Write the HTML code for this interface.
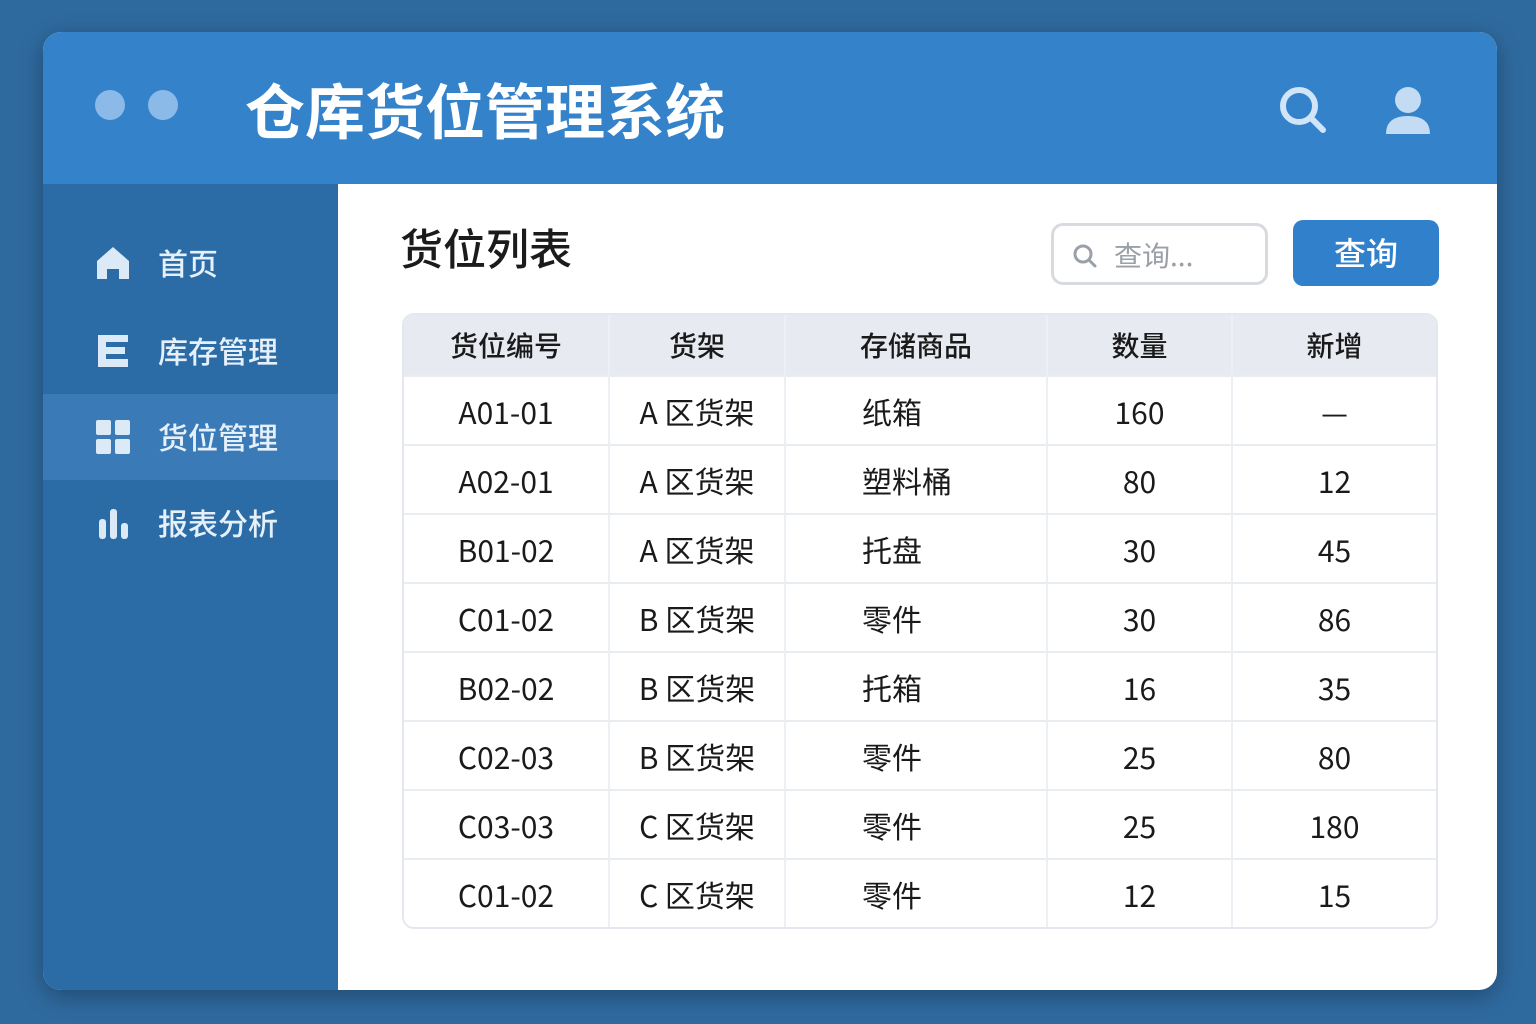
<!DOCTYPE html>
<html><head><meta charset="utf-8"><style>
*{margin:0;padding:0;box-sizing:border-box}
body{width:1536px;height:1024px;background:#2f6a9f;font-family:"Liberation Sans","Noto Sans CJK SC",sans-serif;position:relative;overflow:hidden}
.win{position:absolute;left:43px;top:32px;width:1454px;height:958px;border-radius:18px;overflow:hidden;background:#fff;box-shadow:0 6px 24px rgba(0,0,0,.3)}
.hdr{position:absolute;left:0;top:0;width:100%;height:152px;background:#3482ca}
.dot{position:absolute;top:58px;width:30px;height:30px;border-radius:50%;background:#8bb9e8}
.title{position:absolute;left:202px;top:33px;font-size:60px;font-weight:bold;color:#fff;font-family:"Noto Sans CJK SC",sans-serif}
.side{position:absolute;left:0;top:152px;width:295px;height:806px;background:#2b6ca6}
.item{position:absolute;left:0;width:295px;height:86px;color:#e6f0fb;font-size:30px;font-family:"Noto Sans CJK SC",sans-serif;font-weight:500}
.item span{position:absolute;left:115px;top:20px}
.item svg{position:absolute;left:52px;top:25px}
.main h2{position:absolute;left:357px;top:184px;font-size:43px;font-weight:500;color:#1b1b1b;font-family:"Noto Sans CJK SC",sans-serif}
.search{position:absolute;left:1008px;top:191px;width:217px;height:62px;border:3px solid #d7dadf;border-radius:12px;color:#9aa0a8;font-size:28px;font-family:"Noto Sans CJK SC",sans-serif}
.btn{position:absolute;left:1250px;top:188px;width:146px;height:66px;background:#3180cc;border-radius:10px;color:#fff;font-size:32px;text-align:center;line-height:64px;font-family:"Noto Sans CJK SC",sans-serif;font-weight:500}
table{position:absolute;left:359px;top:281px;width:1036px;border-collapse:separate;border-spacing:0;border:2px solid #e4e8ee;border-radius:12px;overflow:hidden;font-family:"Noto Sans CJK SC","Liberation Sans",sans-serif}
th{height:60px;background:#e7ebf1;font-size:28px;font-weight:500;color:#1a1a1a}
td{height:69px;font-size:30px;color:#1a1a1a;text-align:center;border-top:2px solid #e9ecf0}
th+th,td+td{border-left:2px solid #eceff3}
td.l{text-align:left;padding-left:76px}
</style></head><body>
<div class="win">
 <div class="hdr">
  <div class="dot" style="left:52px"></div><div class="dot" style="left:105px"></div>
  <div class="title">仓库货位管理系统</div>
  <svg style="position:absolute;left:1234px;top:52px" width="52" height="52" viewBox="0 0 52 52"><circle cx="22" cy="22" r="16" fill="none" stroke="#d2e4f7" stroke-width="6"/><line x1="34" y1="34" x2="46" y2="46" stroke="#d2e4f7" stroke-width="6" stroke-linecap="round"/></svg>
  <svg style="position:absolute;left:1340px;top:52px" width="50" height="52" viewBox="0 0 50 52"><circle cx="25" cy="16" r="13" fill="#c3dbf3"/><path d="M3 50 Q3 32 25 32 Q47 32 47 50 Z" fill="#c3dbf3"/></svg>
 </div>
 <div class="side">
  <div class="item" style="top:36px"><svg width="36" height="36" viewBox="0 0 36 36"><path d="M2 16 L18 2 L34 16 V34 H24 V24 H12 V34 H2 Z" fill="#dce9f7"/></svg><span>首页</span></div>
  <div class="item" style="top:124px"><svg width="36" height="36" viewBox="0 0 36 36"><path d="M3 2 H33 V9 H11 V14 H30 V21 H11 V26 H33 V34 H3 Z" fill="#dce9f7"/></svg><span>库存管理</span></div>
  <div class="item" style="top:210px;background:#3a7ab6"><svg width="36" height="36" viewBox="0 0 36 36"><rect x="1" y="1" width="15" height="15" rx="2" fill="#dce9f7"/><rect x="20" y="1" width="15" height="15" rx="2" fill="#dce9f7"/><rect x="1" y="20" width="15" height="15" rx="2" fill="#dce9f7"/><rect x="20" y="20" width="15" height="15" rx="2" fill="#dce9f7"/></svg><span>货位管理</span></div>
  <div class="item" style="top:296px"><svg width="36" height="36" viewBox="0 0 36 36"><rect x="4" y="14" width="7" height="20" rx="3" fill="#dce9f7"/><rect x="15" y="4" width="7" height="30" rx="3" fill="#dce9f7"/><rect x="26" y="18" width="7" height="16" rx="3" fill="#dce9f7"/></svg><span>报表分析</span></div>
 </div>
 <div class="main">
  <h2>货位列表</h2>
  <div class="search"><svg style="position:absolute;left:18px;top:17px" width="26" height="26" viewBox="0 0 26 26"><circle cx="11" cy="11" r="8" fill="none" stroke="#9aa0a8" stroke-width="3"/><line x1="17" y1="17" x2="23" y2="23" stroke="#9aa0a8" stroke-width="3" stroke-linecap="round"/></svg><span style="position:absolute;left:60px;top:9px">查询...</span></div>
  <div class="btn">查询</div>
  <table>
   <tr><th style="width:204px">货位编号</th><th style="width:176px">货架</th><th style="width:262px">存储商品</th><th style="width:185px">数量</th><th>新增</th></tr>
   <tr><td>A01-01</td><td>A 区货架</td><td class="l">纸箱</td><td>160</td><td>—</td></tr>
   <tr><td>A02-01</td><td>A 区货架</td><td class="l">塑料桶</td><td>80</td><td>12</td></tr>
   <tr><td>B01-02</td><td>A 区货架</td><td class="l">托盘</td><td>30</td><td>45</td></tr>
   <tr><td>C01-02</td><td>B 区货架</td><td class="l">零件</td><td>30</td><td>86</td></tr>
   <tr><td>B02-02</td><td>B 区货架</td><td class="l">托箱</td><td>16</td><td>35</td></tr>
   <tr><td>C02-03</td><td>B 区货架</td><td class="l">零件</td><td>25</td><td>80</td></tr>
   <tr><td>C03-03</td><td>C 区货架</td><td class="l">零件</td><td>25</td><td>180</td></tr>
   <tr><td>C01-02</td><td>C 区货架</td><td class="l">零件</td><td>12</td><td>15</td></tr>
  </table>
 </div>
</div>
</body></html>
